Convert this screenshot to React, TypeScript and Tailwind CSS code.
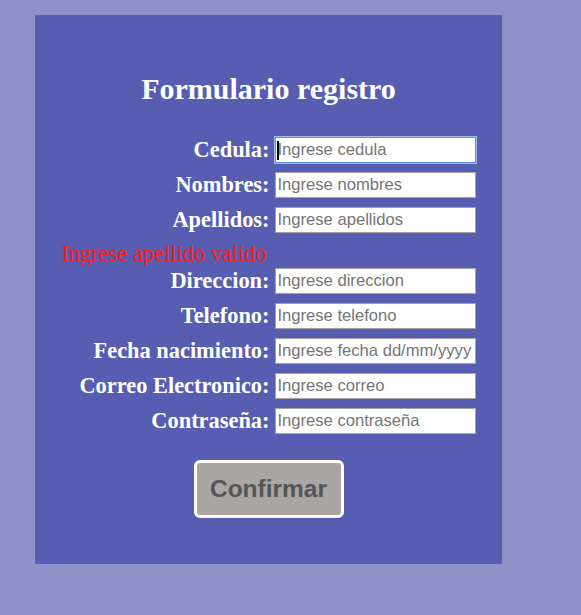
const fields = [
  { label: "Cedula:", placeholder: "Ingrese cedula", focused: true },
  { label: "Nombres:", placeholder: "Ingrese nombres" },
  { label: "Apellidos:", placeholder: "Ingrese apellidos", error: "Ingrese apellido valido" },
  { label: "Direccion:", placeholder: "Ingrese direccion" },
  { label: "Telefono:", placeholder: "Ingrese telefono" },
  { label: "Fecha nacimiento:", placeholder: "Ingrese fecha dd/mm/yyyy" },
  { label: "Correo Electronico:", placeholder: "Ingrese correo" },
  { label: "Contraseña:", placeholder: "Ingrese contraseña", type: "password" },
];

const serif = { fontFamily: "'Liberation Serif', 'Times New Roman', serif" };
const sans = { fontFamily: "'Liberation Sans', Arial, sans-serif" };

export default function App() {
  return (
    <div className="min-h-[615px] w-full bg-[#8f91c8] pt-[15px] pb-[51px]">
      <div className="ml-[35px] w-[467px] h-[549px] bg-[#575db0] pt-[57px] flex flex-col items-center" style={serif}>
        <h1 className="text-[30px] font-bold text-white leading-[normal]">Formulario registro</h1>

        <form className="mt-[31px] w-[414px] grid grid-cols-[1fr_201px] gap-x-[5px] gap-y-[9px]">
          {fields.map((f) => (
            <div key={f.label} className="contents">
              <label className="h-[26px] flex items-center justify-end text-[22.4px] font-bold text-white leading-[normal] whitespace-nowrap">
                {f.label}
              </label>
              <div className="relative">
                <input
                  type={f.type ?? "text"}
                  placeholder={f.placeholder}
                  className={`block w-[201px] h-[26px] px-[2px] bg-white text-[16.6px] text-black placeholder:text-[#757575] outline-none border ${
                    f.focused ? "border-[#5b8ee6] shadow-[0_0_0_1px_#9fbcef]" : "border-[#a3a3a3]"
                  }`}
                  style={sans}
                />
                {f.focused && <span className="absolute left-[2px] top-[4px] w-[2px] h-[19px] bg-black" />}
              </div>
              {f.error && (
                <p className="col-span-2 h-[17px] pr-[210px] text-right text-[22.4px] leading-[23px] text-[#ff1a1a] whitespace-nowrap">
                  {f.error}
                </p>
              )}
            </div>
          ))}
        </form>

        <button
          type="button"
          className="shrink-0 mt-[26px] w-[150px] h-[58px] rounded-[6px] border-[3px] border-white bg-[#aaa6a4] text-[24.5px] font-bold text-[#555555] leading-[normal]"
          style={sans}
        >
          Confirmar
        </button>
      </div>
    </div>
  );
}
